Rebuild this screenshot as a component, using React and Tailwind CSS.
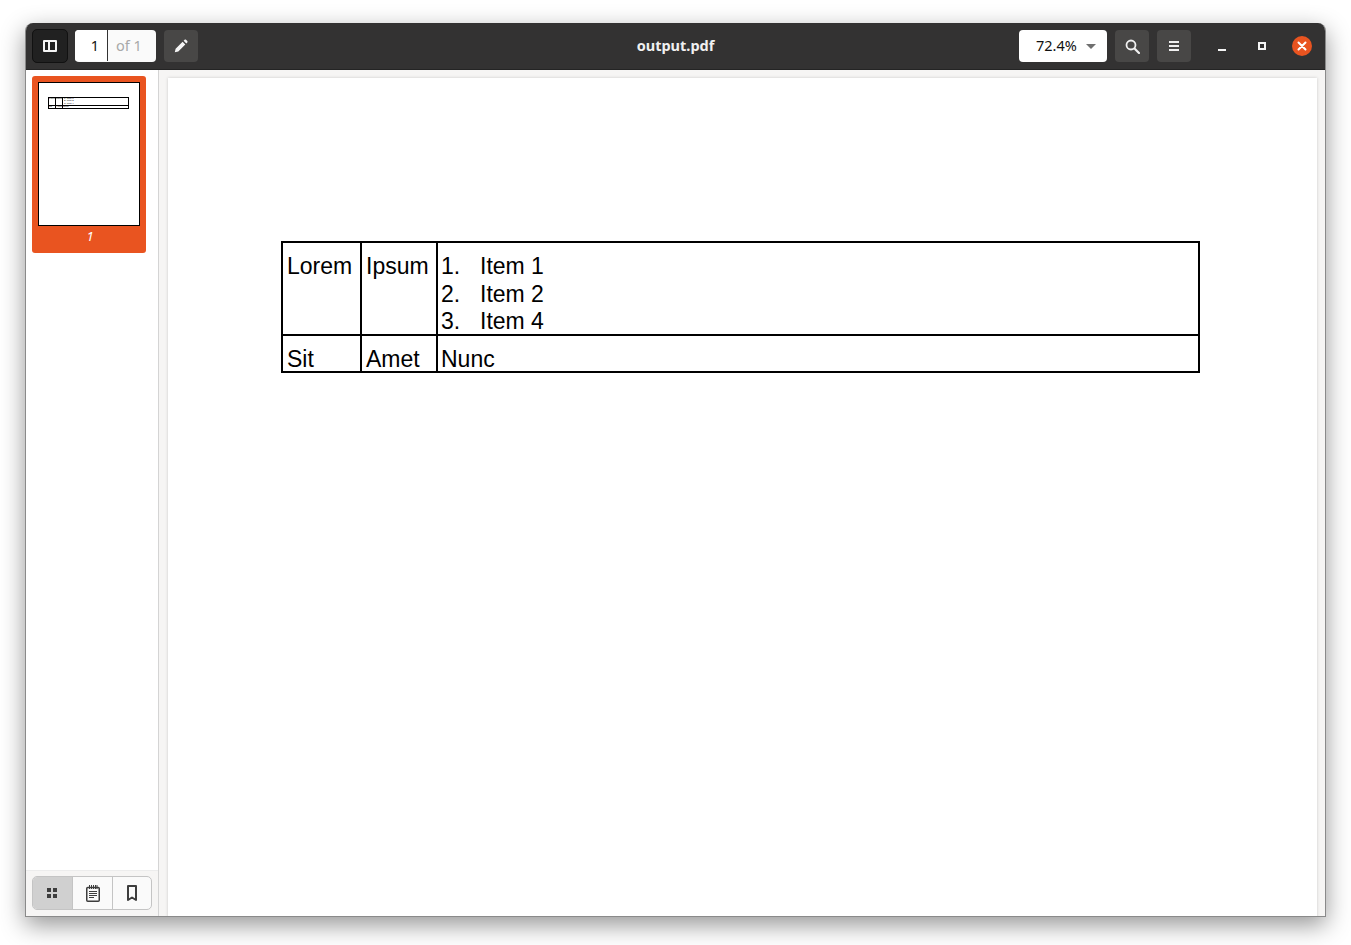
import React from 'react';

const PanelIcon = () => (
  <svg width="14" height="12" viewBox="0 0 14 12" fill="none">
    <path fillRule="evenodd" clipRule="evenodd" d="M1 0h12a1 1 0 0 1 1 1v10a1 1 0 0 1-1 1H1a1 1 0 0 1-1-1V1a1 1 0 0 1 1-1zm1 2v8h3V2H2zm5 0v8h5V2H7z" fill="#f5f5f5" />
  </svg>
);

const PencilIcon = () => (
  <svg width="14" height="14" viewBox="0 0 14 14">
    <path d="M0.8 13.2l0.8-3.5 7-7 2.7 2.7-7 7zM9.6 1.7l1-1c.4-.4 1-.4 1.4 0l1.300 1.300c.4.4.4 1 0 1.400l-1 1z" fill="#f5f5f5" />
  </svg>
);

const SearchIcon = () => (
  <svg width="15" height="15" viewBox="0 0 15 15" fill="none" stroke="#f0f0f0">
    <circle cx="6" cy="6" r="4.500" strokeWidth="1.800" />
    <path d="M9.500 9.500L14 14" strokeWidth="2.200" strokeLinecap="round" />
  </svg>
);

const MenuIcon = () => (
  <div className="flex w-[10px] flex-col gap-[2px]">
    <div className="h-[2px] bg-[#f0f0f0]" />
    <div className="h-[2px] bg-[#f0f0f0]" />
    <div className="h-[2px] bg-[#f0f0f0]" />
  </div>
);

const GridIcon = () => (
  <div className="grid grid-cols-2 gap-[2px]">
    <div className="h-[4px] w-[4px] bg-[#3d3d3d]" />
    <div className="h-[4px] w-[4px] bg-[#3d3d3d]" />
    <div className="h-[4px] w-[4px] bg-[#3d3d3d]" />
    <div className="h-[4px] w-[4px] bg-[#3d3d3d]" />
  </div>
);

const NotesIcon = () => (
  <svg width="14" height="17" viewBox="0 0 14 17" fill="none" stroke="#3d3d3d">
    <rect x="0.750" y="2.500" width="12.500" height="13.750" rx="1" strokeWidth="1.500" />
    <path d="M3.500 0v4M5.500 0v4M7.500 0v4M9.500 0v4M11 0v4" strokeWidth="1" />
    <path d="M3 6.500h8M3 8.500h8M3 10.500h8M3 12.500h5" strokeWidth="1" />
  </svg>
);

const BookmarkIcon = () => (
  <svg width="10" height="16" viewBox="0 0 10 16" fill="none" stroke="#3d3d3d" strokeWidth="2">
    <path d="M1 1h8v14l-4-2.500L1 15z" strokeLinejoin="round" />
  </svg>
);

const rows = [
  { a: 'Lorem', b: 'Ipsum', items: ['Item 1', 'Item 2', 'Item 4'] },
  { a: 'Sit', b: 'Amet', c: 'Nunc' },
];

const PdfTable = () => (
  <table className="w-[919px] table-fixed border-collapse border-2 border-black text-[23px] leading-[27.500px] text-black [font-family:'Liberation_Sans',Arial,sans-serif]">
    <colgroup>
      <col className="w-[79px]" />
      <col className="w-[76px]" />
      <col />
    </colgroup>
    <tbody>
      <tr>
        <td className="border-2 border-black pt-[10px] pr-0 pb-0 pl-[4px] align-top">{rows[0].a}</td>
        <td className="border-2 border-black pt-[10px] pr-0 pb-0 pl-[4px] align-top">{rows[0].b}</td>
        <td className="border-2 border-black pt-[10px] pr-0 pb-0 pl-[3px] align-top">
          <div className="h-[81px]">
            {rows[0].items.map((item, index) => (
              <div key={item} className="flex">
                <span className="w-[39px]">{index + 1}.</span>
                <span>{item}</span>
              </div>
            ))}
          </div>
        </td>
      </tr>
      <tr className="leading-[23px]">
        <td className="border-2 border-black pt-[12px] pr-0 pb-0 pl-[4px] align-top">{rows[1].a}</td>
        <td className="border-2 border-black pt-[12px] pr-0 pb-0 pl-[4px] align-top">{rows[1].b}</td>
        <td className="border-2 border-black pt-[12px] pr-0 pb-0 pl-[3px] align-top">{rows[1].c}</td>
      </tr>
    </tbody>
  </table>
);

const MiniTable = () => (
  <table className="w-[81px] table-fixed border-collapse border border-black text-[2.500px] leading-[2.300px] text-black [font-family:'Liberation_Sans',Arial,sans-serif]">
    <colgroup>
      <col className="w-[7px]" />
      <col className="w-[7px]" />
      <col />
    </colgroup>
    <tbody>
      <tr>
        <td className="border border-black p-0 align-top">Lorem</td>
        <td className="border border-black p-0 align-top">Ipsum</td>
        <td className="border border-black pt-0 pr-0 pb-0 pl-[1px] align-top">
          <div>1. Item 1</div>
          <div>2. Item 2</div>
          <div>3. Item 4</div>
        </td>
      </tr>
      <tr>
        <td className="border border-black p-0 align-top">Sit</td>
        <td className="border border-black p-0 align-top">Amet</td>
        <td className="border border-black p-0 align-top">Nunc</td>
      </tr>
    </tbody>
  </table>
);

const App = () => {
  return (
    <div className="min-h-[945px] bg-white pt-[23px] pl-[25px] [font-family:'Noto_Sans',sans-serif]">
      <div className="flex h-[894px] w-[1301px] flex-col overflow-hidden rounded-t-[8px] border-x border-b border-[#8a8a8a] bg-[#f6f5f4] shadow-[0_8px_24px_rgba(0,0,0,0.42)]">
        <header className="flex h-[47px] shrink-0 items-center border-b border-[#242424] bg-[#333232] px-[6px]">
          <div className="flex flex-1 items-center">
            <button className="flex h-[34px] w-[36px] items-center justify-center rounded-[5px] border border-[#111] bg-[#212121]">
              <PanelIcon />
            </button>
            <div className="ml-[7px] flex h-[32px] w-[81px] overflow-hidden rounded-[4px] bg-[#fafafa] pb-[1px] text-[14.500px]">
              <div className="flex w-[33px] items-center justify-end border-r border-[#333] bg-white pr-[8px] text-[#111]">1</div>
              <div className="flex flex-1 items-center pl-[8px] text-[#a8a8a8]">of 1</div>
            </div>
            <button className="ml-[8px] flex h-[32px] w-[34px] items-center justify-center rounded-[4px] bg-[#484746]">
              <PencilIcon />
            </button>
          </div>
          <div className="pb-[1px] text-center text-[14.500px] font-bold text-[#f0f0f0]">output.pdf</div>
          <div className="flex flex-1 items-center justify-end">
            <div className="flex h-[32px] w-[88px] items-center rounded-[4px] bg-white pb-[1px] pl-[17px] text-[14.500px] text-[#111]">
              72.4%
              <div className="mt-[1px] ml-[9px] h-0 w-0 border-x-[5px] border-t-[5px] border-x-transparent border-t-[#6f6f6f]" />
            </div>
            <button className="ml-[8px] flex h-[32px] w-[34px] items-center justify-center rounded-[4px] bg-[#484746]">
              <SearchIcon />
            </button>
            <button className="ml-[8px] flex h-[32px] w-[34px] items-center justify-center rounded-[4px] bg-[#484746]">
              <MenuIcon />
            </button>
            <div className="ml-[27px] flex h-[32px] w-[8px] items-end pb-[11px]">
              <div className="h-[2px] w-[8px] bg-[#f5f5f5]" />
            </div>
            <div className="ml-[32px] h-[8px] w-[8px] border-2 border-[#f5f5f5]" />
            <div className="mr-[7px] ml-[26px] flex h-[20px] w-[20px] items-center justify-center rounded-full bg-[#e95420]">
              <svg width="10" height="10" viewBox="0 0 10 10" stroke="#fff" strokeWidth="2" strokeLinecap="round">
                <path d="M1.500 1.500l7 7M8.500 1.500l-7 7" />
              </svg>
            </div>
          </div>
        </header>

        <div className="flex min-h-0 flex-1">
          <aside className="flex w-[133px] shrink-0 flex-col border-r border-[#d4d4d4] bg-white">
            <div className="flex-1 pt-[6px] pl-[6px]">
              <div className="h-[177px] w-[114px] rounded-[3px] bg-[#e95420] p-[6px]">
                <div className="h-[144px] w-[102px] border border-black bg-white pt-[14px] pl-[9px]">
                  <MiniTable />
                </div>
                <div className="mt-[2px] pl-[2px] text-center text-[13px] leading-[16px] text-white italic">1</div>
              </div>
            </div>
            <div className="h-[46px] border-t border-[#ececec] bg-[#f6f5f4] pt-[5px] pl-[6px]">
              <div className="flex h-[34px] w-[120px] overflow-hidden rounded-[5px] border border-[#c4c4c4] bg-[#fafafa]">
                <div className="flex w-[40px] items-center justify-center border-r border-[#c4c4c4] bg-[#d0d0d0] pr-[2px]">
                  <GridIcon />
                </div>
                <div className="flex w-[40px] items-center justify-center border-r border-[#c4c4c4]">
                  <NotesIcon />
                </div>
                <div className="flex flex-1 items-center justify-center">
                  <BookmarkIcon />
                </div>
              </div>
            </div>
          </aside>

          <main className="flex-1 overflow-hidden pt-[8px] pl-[9px]">
            <div className="h-[846px] w-[1149px] bg-white pt-[163px] pl-[113px] shadow-[0_0_3px_rgba(0,0,0,0.18)]">
              <PdfTable />
            </div>
          </main>
        </div>
      </div>
    </div>
  );
};

export default App;
